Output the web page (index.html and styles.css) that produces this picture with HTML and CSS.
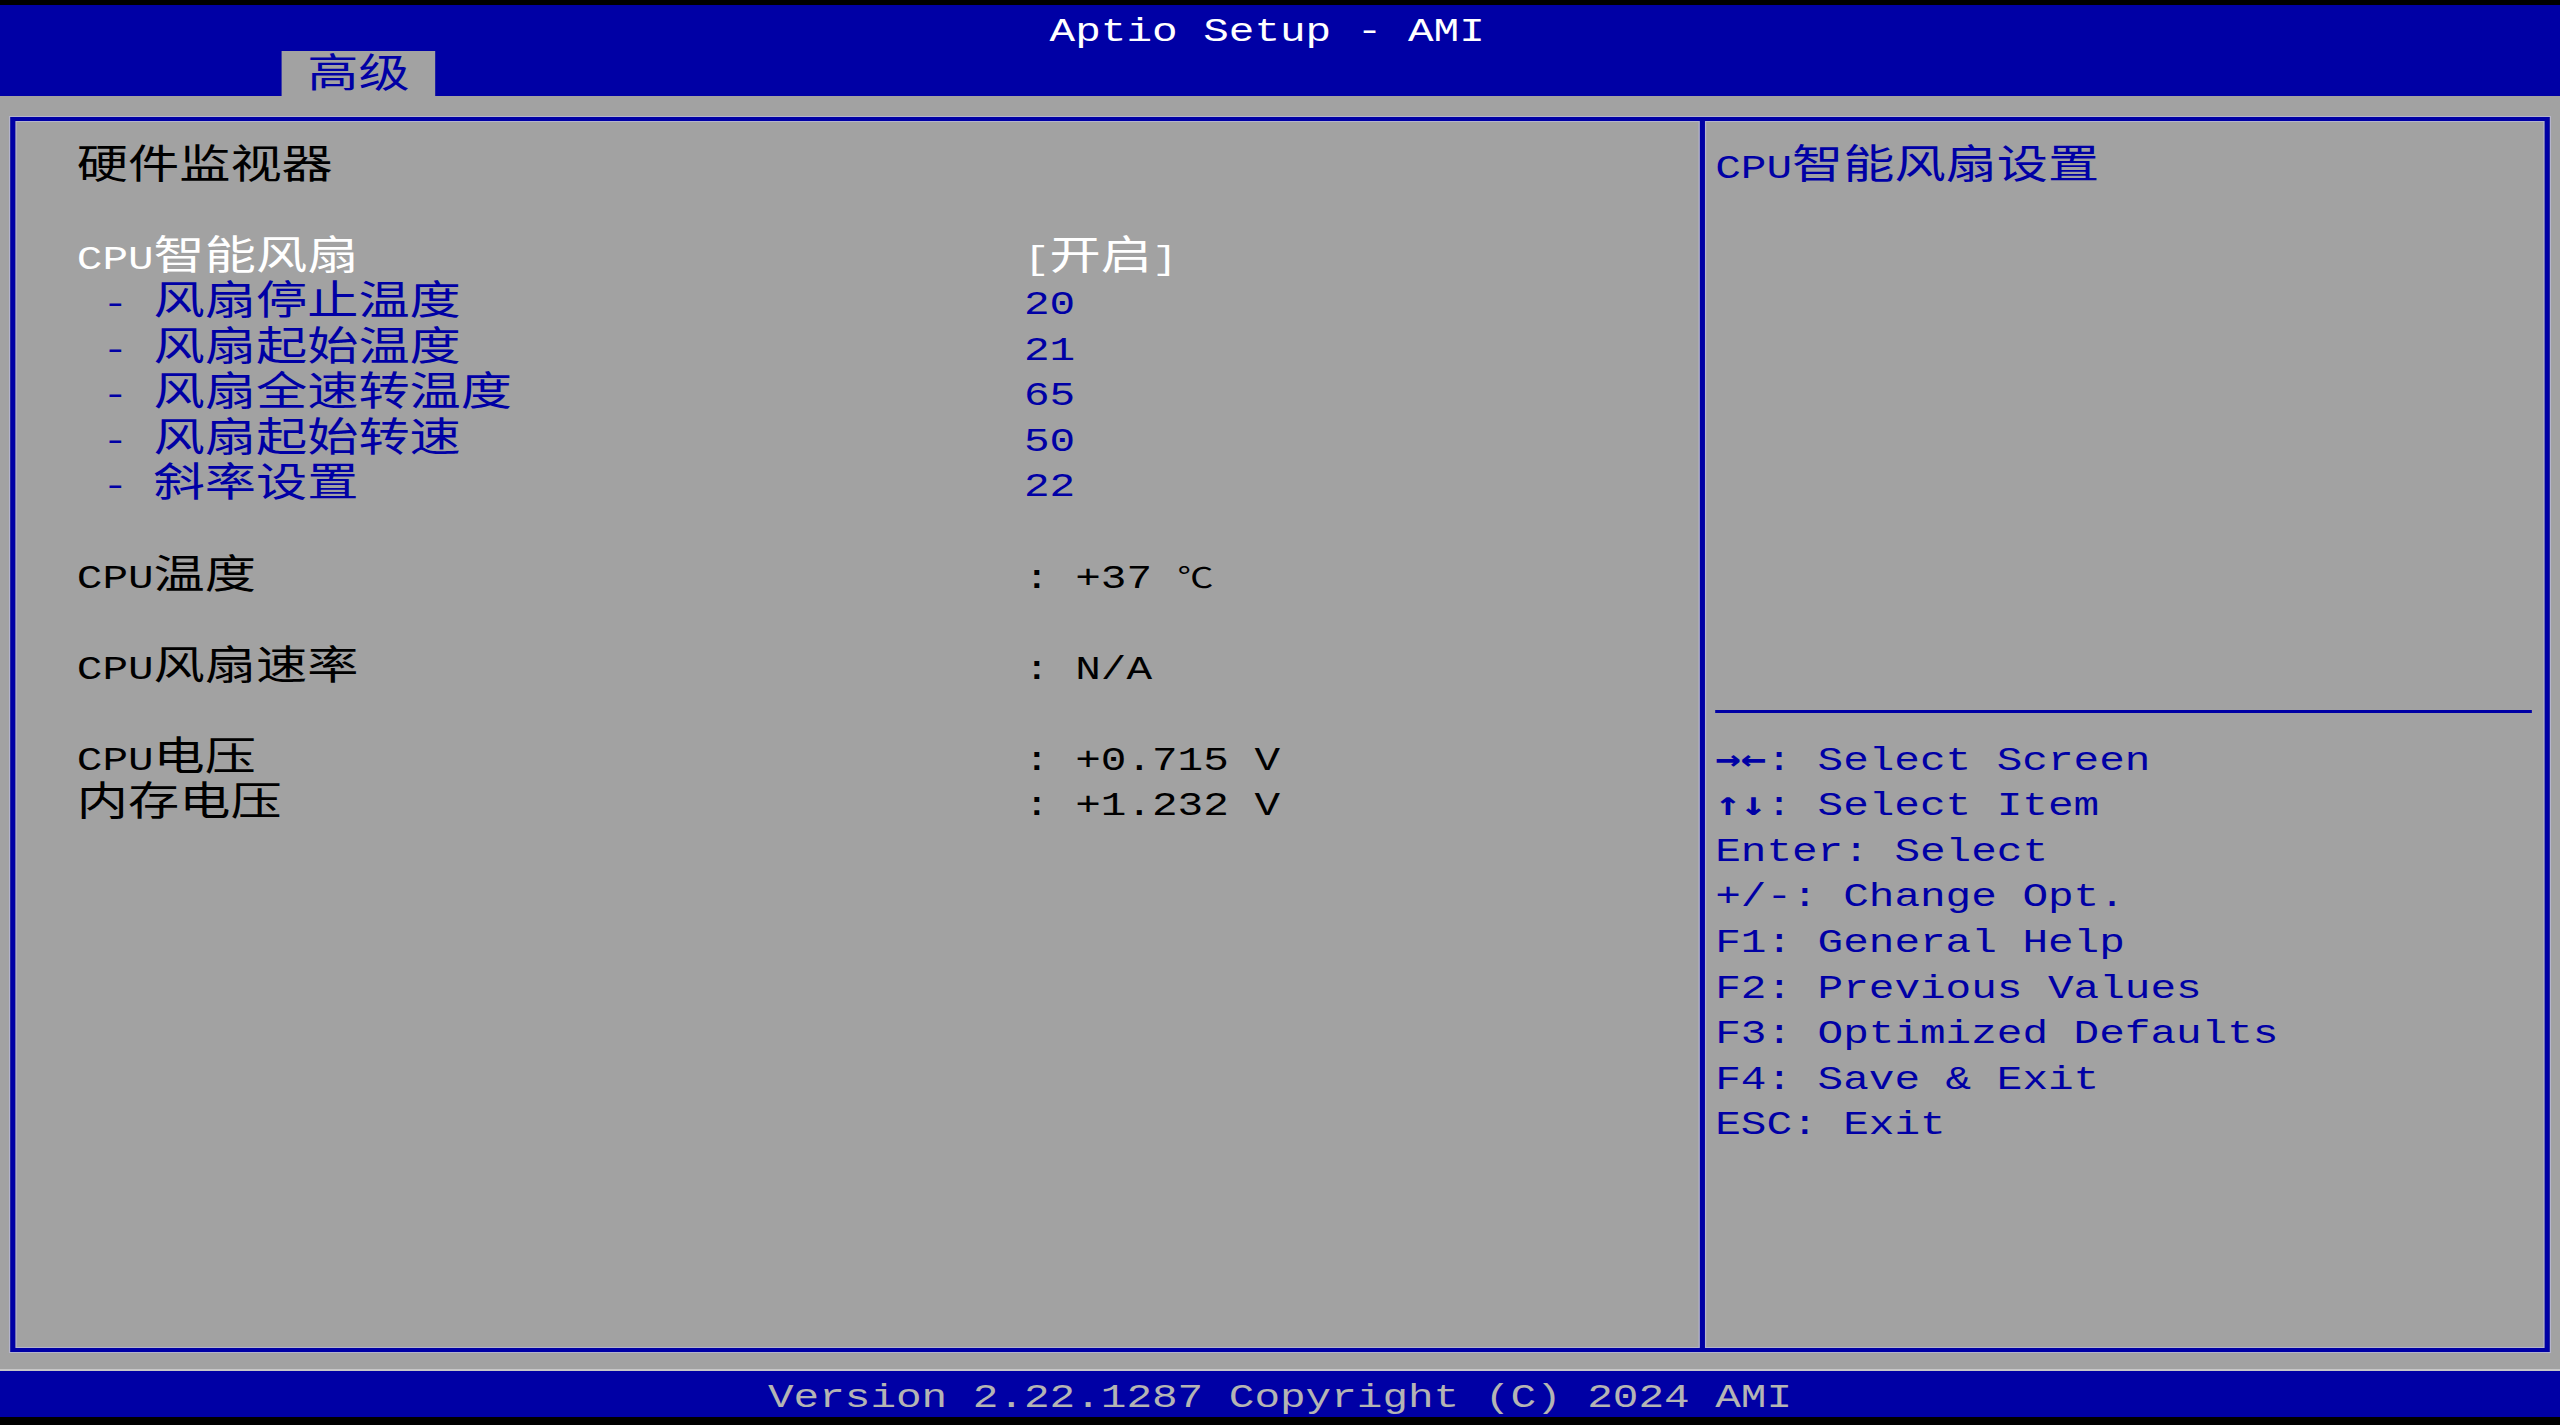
FILE: index.html
```html
<!DOCTYPE html>
<html lang="zh-CN">
<head>
<meta charset="utf-8">
<title>Aptio Setup - AMI</title>
<link rel="stylesheet" href="styles.css">
</head>
<body>
<div class="screen">
  <header class="topbar">
    <div class="line title">Aptio Setup - AMI</div>
    <nav class="tabs"><span class="tab"><span class="cj">高级</span></span></nav>
  </header>
  <div class="body">
    <div class="frame">
      <section class="panel main">
        <div class="line heading"><span class="cj">硬件监视器</span></div>
        <div class="line"></div>
        <div class="line item selected"><span class="label">CPU<span class="cj">智能风扇</span></span><span class="value">[<span class="cj">开启</span>]</span></div>
        <div class="line item sub"><span class="label">- <span class="cj">风扇停止温度</span></span><span class="value">20</span></div>
        <div class="line item sub"><span class="label">- <span class="cj">风扇起始温度</span></span><span class="value">21</span></div>
        <div class="line item sub"><span class="label">- <span class="cj">风扇全速转温度</span></span><span class="value">65</span></div>
        <div class="line item sub"><span class="label">- <span class="cj">风扇起始转速</span></span><span class="value">50</span></div>
        <div class="line item sub"><span class="label">- <span class="cj">斜率设置</span></span><span class="value">22</span></div>
        <div class="line"></div>
        <div class="line item info"><span class="label">CPU<span class="cj">温度</span></span><span class="value">: +37 <span class="deg">℃</span></span></div>
        <div class="line"></div>
        <div class="line item info"><span class="label">CPU<span class="cj">风扇速率</span></span><span class="value">: N/A</span></div>
        <div class="line"></div>
        <div class="line item info"><span class="label">CPU<span class="cj">电压</span></span><span class="value">: +0.715 V</span></div>
        <div class="line item info"><span class="label"><span class="cj">内存电压</span></span><span class="value">: +1.232 V</span></div>
      </section>
      <div class="divider"></div>
      <aside class="panel help">
        <div class="desc"><div class="line">CPU<span class="cj">智能风扇设置</span></div></div>
        <div class="sep"></div>
        <div class="keys">
          <div class="line"><span class="arw">→←</span>: Select Screen</div>
          <div class="line"><span class="arw">↑↓</span>: Select Item</div>
          <div class="line">Enter: Select</div>
          <div class="line">+/-: Change Opt.</div>
          <div class="line">F1: General Help</div>
          <div class="line">F2: Previous Values</div>
          <div class="line">F3: Optimized Defaults</div>
          <div class="line">F4: Save &amp; Exit</div>
          <div class="line">ESC: Exit</div>
        </div>
      </aside>
    </div>
  </div>
  <footer class="footbar"><div class="line">Version 2.22.1287 Copyright (C) 2024 AMI</div></footer>
</div>
</body>
</html>
```

FILE: styles.css
```css
html, body {
  margin: 0;
  padding: 0;
  background: #000;
}

body {
  width: 2560px;
  height: 1425px;
  overflow: hidden;
  padding-top: 5px;
  box-sizing: border-box;
}

.screen {
  width: 2000px;
  transform: scaleX(1.28);
  transform-origin: 0 0;
  font-family: "Liberation Mono", "Noto Sans CJK SC", monospace;
  font-size: 33.333px;
  color: #000;
}

.line {
  height: 45.55px;
  box-sizing: border-box;
  padding-top: 10px;
  line-height: 35.55px;
  white-space: pre;
}

.cj {
  font-family: "Noto Sans CJK SC", sans-serif;
  font-size: 40px;
  line-height: 0;
}

.deg {
  font-family: "Noto Sans CJK SC", sans-serif;
  font-size: 28px;
  line-height: 0;
}

.arw {
  font-family: "DejaVu Sans Mono", monospace;
  font-weight: bold;
  font-size: 33.2px;
  line-height: 0;
}

/* header */
.topbar {
  background: #0000a5;
  height: 91.1px;
}

.title {
  color: #fff;
  padding-left: 820px;
}

.tabs {
  display: flex;
  height: 45.55px;
  padding-left: 220px;
}

.tab {
  width: 120px;
  height: 45.55px;
  box-sizing: border-box;
  padding: 10px 0 0 20px;
  line-height: 35.55px;
  background: #a2a2a2;
  color: #0000a5;
}

/* body */
.body {
  background: #a2a2a2;
  height: 1275.4px;
  display: flex;
  flex-direction: column;
  box-shadow: inset 0 -2px 0 #c6c6c6;
}

.frame {
  flex: 1;
  margin: 21px 8px 19.5px;
  border: 4px solid #0000a5;
  display: grid;
  grid-template-columns: 1316px 4px 1fr;
  box-shadow: 0 0 0 1px #b4b4cc, inset 0 0 0 1px #b4b4cc;
}

.divider {
  background: #0000a5;
  box-shadow: 1px 0 0 #b4b4cc, -1px 0 0 #b4b4cc;
}

.panel {
  padding-top: 20.55px;
}

.main {
  padding-left: 48px;
}

.item {
  display: grid;
  grid-template-columns: 740px 1fr;
}

.selected {
  color: #fff;
}

.sub {
  color: #0000a5;
}

.sub .label {
  padding-left: 20px;
}

/* help */
.help {
  padding-left: 8px;
  padding-right: 10px;
  color: #0000a5;
}

.desc {
  height: 546.6px;
}

.sep {
  height: 45.55px;
  display: flex;
  align-items: center;
}

.sep::before {
  content: "";
  flex: 1;
  height: 3px;
  background: #0000a5;
}

/* footer */
.footbar {
  background: #0000a5;
  height: 45.55px;
  color: #b4b4b4;
}

.footbar .line {
  padding-left: 600px;
}
```
